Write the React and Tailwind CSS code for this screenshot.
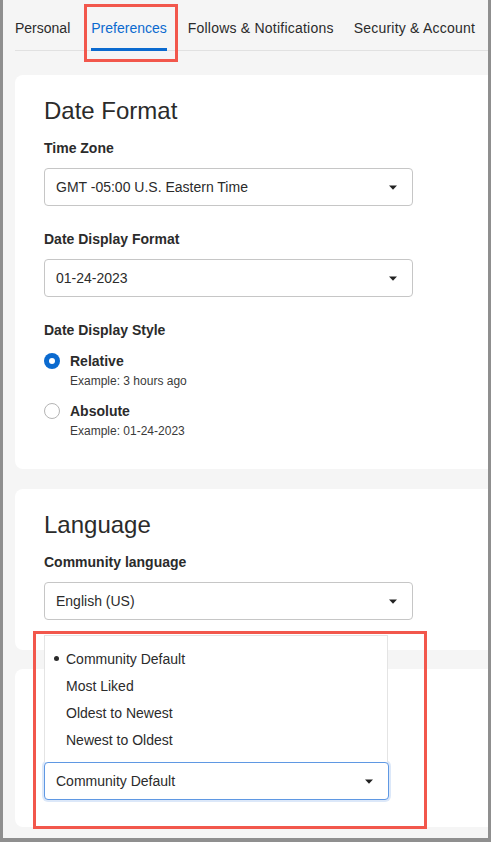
import React from "react";

const Caret = () => (
  <svg width="8" height="5" viewBox="0 0 8 5" className="shrink-0">
    <path d="M0 0.5 L8 0.5 L4 4.8 Z" fill="#222" />
  </svg>
);

const Select = ({ value, width = "w-[369px]", focused = false }) => (
  <div
    className={`${width} h-[38px] flex items-center justify-between pl-[11px] pr-[15px] rounded-[4px] bg-white border ${
      focused
        ? "border-[#5f98e3] shadow-[0_0_0_2px_rgba(95,152,227,0.22)]"
        : "border-[#c6c6c6]"
    }`}
  >
    <span className="text-[14px] leading-[20px] text-[#2b2b2b]">{value}</span>
    <Caret />
  </div>
);

const Label = ({ children, className = "" }) => (
  <div className={`text-[14px] leading-[20px] font-bold text-[#2b2b2b] ${className}`}>
    {children}
  </div>
);

const Radio = ({ checked, label, example, className = "" }) => (
  <div className={className}>
    <div className="flex items-center h-[20px]">
      {checked ? (
        <span className="w-[16px] h-[16px] rounded-full bg-[#0b6acf] flex items-center justify-center">
          <span className="w-[6px] h-[6px] rounded-full bg-white" />
        </span>
      ) : (
        <span className="w-[16px] h-[16px] rounded-full bg-white border border-[#b4b4b4]" />
      )}
      <span className="ml-[10px] text-[14px] leading-[20px] font-bold text-[#2b2b2b]">
        {label}
      </span>
    </div>
    <div className="ml-[26px] mt-[2px] text-[12px] leading-[16px] text-[#3a3a3a]">
      {example}
    </div>
  </div>
);

const tabs = [
  { name: "Personal", cls: "" },
  { name: "Preferences", cls: "" },
  { name: "Follows & Notifications", cls: "tracking-[0.22px]" },
  { name: "Security & Account", cls: "tracking-[0.22px] -ml-px" },
];
const sortOptions = ["Community Default", "Most Liked", "Oldest to Newest", "Newest to Oldest"];

export default function App() {
  return (
    <div className="relative w-[491px] h-[842px] overflow-hidden bg-[#f5f5f5] border-l-[3px] border-r-[3px] border-b-[4px] border-[#8f8f8f] font-['Liberation_Sans',Arial,sans-serif] text-[#2b2b2b]">
      {/* tabs */}
      <div className="ml-[12px] flex gap-[21px] border-b border-[#e1e1e1] h-[51px]">
        {tabs.map((t) => (
          <div key={t.name} className={`relative pt-[16px] ${t.cls}`}>
            <span
              className={`text-[14px] leading-[20px] whitespace-nowrap ${
                t.name === "Preferences" ? "text-[#0b6acf]" : "text-[#2b2b2b]"
              }`}
            >
              {t.name}
            </span>
            {t.name === "Preferences" && (
              <span className="absolute left-0 right-0 bottom-[-1px] h-[3px] bg-[#0b6acf]" />
            )}
          </div>
        ))}
      </div>

      {/* Date Format */}
      <div className="ml-[12px] mt-[24px] bg-white rounded-l-[8px] pl-[29px] pt-[20px] pb-[30px]">
        <h2 className="text-[24px] leading-[32px]">Date Format</h2>
        <Label className="mt-[11px]">Time Zone</Label>
        <div className="mt-[10px]">
          <Select value="GMT -05:00 U.S. Eastern Time" />
        </div>
        <Label className="mt-[23px]">Date Display Format</Label>
        <div className="mt-[10px]">
          <Select value="01-24-2023" />
        </div>
        <Label className="mt-[23px]">Date Display Style</Label>
        <Radio className="mt-[11px]" checked label="Relative" example="Example: 3 hours ago" />
        <Radio className="mt-[12px]" label="Absolute" example="Example: 01-24-2023" />
      </div>

      {/* Language */}
      <div className="ml-[12px] mt-[20px] bg-white rounded-l-[8px] pl-[29px] pt-[20px] pb-[30px]">
        <h2 className="text-[24px] leading-[32px]">Language</h2>
        <Label className="mt-[11px]">Community language</Label>
        <div className="mt-[10px]">
          <Select value="English (US)" />
        </div>
      </div>

      {/* Sort card with open menu */}
      <div className="ml-[12px] mt-[19px] bg-white rounded-l-[8px] pl-[29px] pt-[93px] pb-[27px]">
        <div className="relative w-[345px]">
          <div className="absolute left-0 bottom-full w-[344px] bg-white border border-b-0 border-[#e4e4e4] py-[9px]">
            {sortOptions.map((o, i) => (
              <div key={o} className="flex items-center h-[27px]">
                <div className="w-[21px] pl-[9px]">
                  {i === 0 && <span className="block w-[5px] h-[5px] rounded-full bg-[#2b2b2b]" />}
                </div>
                <span className="text-[14px] leading-[20px]">{o}</span>
              </div>
            ))}
          </div>
          <Select value="Community Default" width="w-[345px]" focused />
        </div>
      </div>

      {/* annotation boxes */}
      <div className="absolute left-[81px] top-[4px] w-[94px] h-[58px] border-[3px] border-[#f2574c]" />
      <div className="absolute left-[30px] top-[631px] w-[394px] h-[198px] border-[3px] border-[#f2574c]" />
    </div>
  );
}
